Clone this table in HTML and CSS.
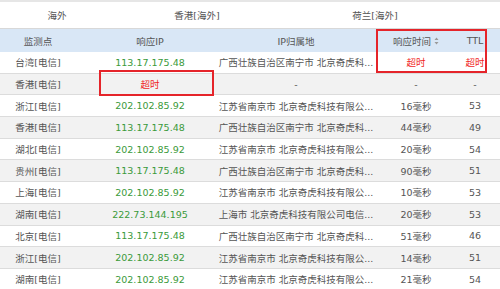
FILE: index.html
```html
<!DOCTYPE html>
<html lang="zh">
<head>
<meta charset="utf-8">
<link rel="stylesheet" href="styles.css">
</head>
<body>
<div class="page">
  <div class="tabs">
    <div class="tab">海外</div>
    <div class="tab">香港[海外]</div>
    <div class="tab">荷兰[海外]</div>
  </div>
  <div class="table">
    <div class="row head">
      <div class="cell">监测点</div>
      <div class="cell">响应IP</div>
      <div class="cell">IP归属地</div>
      <div class="cell">响应时间<svg class="sort" width="5" height="8" viewBox="0 0 5 8"><path d="M2.5 0.5 L4.5 3 L0.5 3 Z M2.5 7.5 L4.5 5 L0.5 5 Z" fill="#9a9a9a"/></svg></div>
      <div class="cell">TTL</div>
      <div class="cell"></div>
    </div>
    <div class="row"><div class="cell">台湾[电信]</div><div class="cell ip">113.17.175.48</div><div class="cell">广西壮族自治区南宁市 北京奇虎科...</div><div class="cell err">超时</div><div class="cell err">超时</div><div class="cell"></div></div>
    <div class="row"><div class="cell">香港[电信]</div><div class="cell err">超时</div><div class="cell">-</div><div class="cell">-</div><div class="cell">-</div><div class="cell"></div></div>
    <div class="row"><div class="cell">浙江[电信]</div><div class="cell ip">202.102.85.92</div><div class="cell">江苏省南京市 北京奇虎科技有限公...</div><div class="cell">16毫秒</div><div class="cell">53</div><div class="cell"></div></div>
    <div class="row"><div class="cell">香港[电信]</div><div class="cell ip">113.17.175.48</div><div class="cell">广西壮族自治区南宁市 北京奇虎科...</div><div class="cell">44毫秒</div><div class="cell">49</div><div class="cell"></div></div>
    <div class="row"><div class="cell">湖北[电信]</div><div class="cell ip">202.102.85.92</div><div class="cell">江苏省南京市 北京奇虎科技有限公...</div><div class="cell">20毫秒</div><div class="cell">54</div><div class="cell"></div></div>
    <div class="row"><div class="cell">贵州[电信]</div><div class="cell ip">113.17.175.48</div><div class="cell">广西壮族自治区南宁市 北京奇虎科...</div><div class="cell">90毫秒</div><div class="cell">51</div><div class="cell"></div></div>
    <div class="row"><div class="cell">上海[电信]</div><div class="cell ip">202.102.85.92</div><div class="cell">江苏省南京市 北京奇虎科技有限公...</div><div class="cell">10毫秒</div><div class="cell">53</div><div class="cell"></div></div>
    <div class="row"><div class="cell">湖南[电信]</div><div class="cell ip">222.73.144.195</div><div class="cell">上海市 北京奇虎科技有限公司电信...</div><div class="cell">20毫秒</div><div class="cell">53</div><div class="cell"></div></div>
    <div class="row"><div class="cell">北京[电信]</div><div class="cell ip">113.17.175.48</div><div class="cell">广西壮族自治区南宁市 北京奇虎科...</div><div class="cell">51毫秒</div><div class="cell">46</div><div class="cell"></div></div>
    <div class="row"><div class="cell">浙江[电信]</div><div class="cell ip">202.102.85.92</div><div class="cell">江苏省南京市 北京奇虎科技有限公...</div><div class="cell">14毫秒</div><div class="cell">51</div><div class="cell"></div></div>
    <div class="row"><div class="cell">湖南[电信]</div><div class="cell ip">202.102.85.92</div><div class="cell">江苏省南京市 北京奇虎科技有限公...</div><div class="cell">21毫秒</div><div class="cell">54</div><div class="cell"></div></div>
  </div>
  <div class="mark mark-ip"></div>
  <div class="mark mark-time"></div>
</div>
</body>
</html>
```

FILE: styles.css
```css
html, body {
  margin: 0;
  padding: 0;
  background: #fff;
}
body {
  font-family: "DejaVu Sans", "Noto Sans CJK SC", sans-serif;
  font-size: 9.5px;
  color: #555;
}
.page {
  position: relative;
  width: 500px;
  height: 289px;
  overflow: hidden;
  border-top: 2px solid #e6e6e6;
  box-sizing: border-box;
}
.tabs {
  display: grid;
  grid-template-columns: 114px 166px 190px 1fr;
  height: 27px;
  border-bottom: 1px solid #d8d8d8;
  box-sizing: border-box;
}
.tab {
  display: flex;
  align-items: center;
  justify-content: center;
}
.table {
  display: flex;
  flex-direction: column;
}
.row {
  display: grid;
  grid-template-columns: 76px 148px 144px 96px 22px 14px;
  height: 21.7px;
  border-bottom: 1px solid #dcdcdc;
  box-sizing: border-box;
  flex: none;
}
.row.head {
  height: 23px;
  background: #d9e7f6;
  border-bottom: none;
}
.row:nth-child(odd):not(.head) {
  background: #f2f2f2;
}
.cell {
  display: flex;
  align-items: center;
  justify-content: center;
  white-space: nowrap;
  min-width: 0;
}
.ip {
  color: #3a9a3a;
}
.err {
  color: #f01e1e;
}
.sort {
  margin-left: 3px;
  flex: none;
}
.mark {
  position: absolute;
  border: 2px solid #e5242a;
  box-sizing: border-box;
}
.mark-ip {
  left: 99px;
  top: 68px;
  width: 115px;
  height: 26px;
}
.mark-time {
  left: 376px;
  top: 27px;
  width: 111px;
  height: 44px;
}
```
